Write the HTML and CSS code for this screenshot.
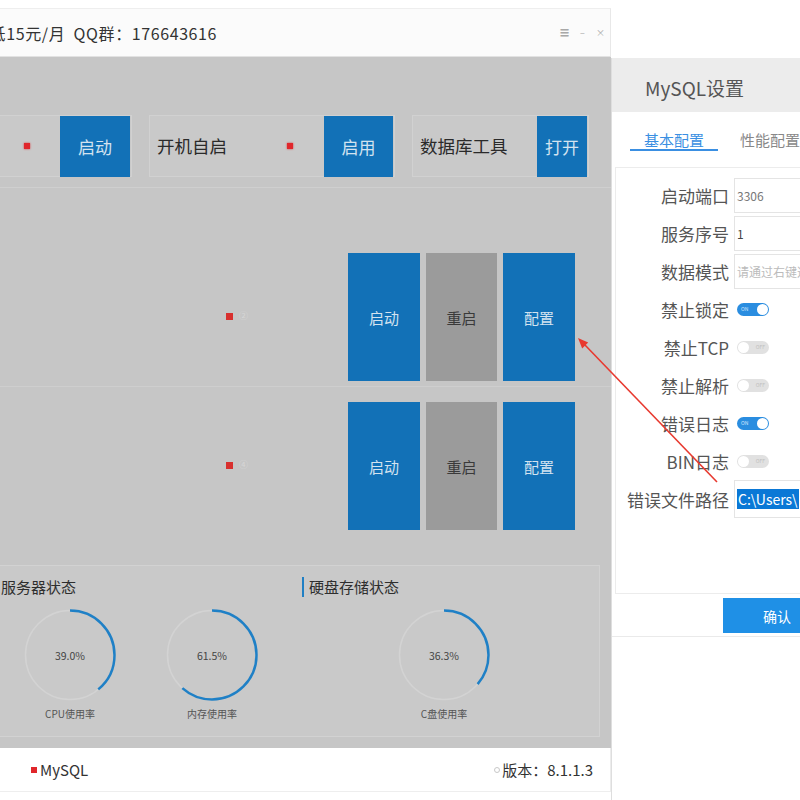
FILE: index.html
```html
<!DOCTYPE html>
<html lang="zh">
<head>
<meta charset="utf-8">
<title>MySQL</title>
<link rel="stylesheet" href="styles.css">
</head>
<body>
<div class="screen">
  <div class="window">
    <div class="titlebar">
      <span class="title">最低15元/月&nbsp;&nbsp;QQ群：176643616</span>
      <div class="winctl"><span>☰</span><span>–</span><span>×</span></div>
    </div>
    <div class="content">
      <div class="toprow">
        <div class="card card-a"><span class="rdot"></span><button class="btn btn-top">启动</button></div>
        <div class="card card-b"><span class="clabel">开机自启</span><span class="rdot"></span><button class="btn btn-top btn-b">启用</button></div>
        <div class="card card-c"><span class="clabel">数据库工具</span><button class="btn btn-top btn-c">打开</button></div>
      </div>
      <div class="svc svc-1">
        <div class="svc-info"><span class="sdot"></span><span class="snum">②</span></div>
        <div class="svc-btns">
          <button class="btn btn-svc">启动</button>
          <button class="btn btn-svc btn-gray">重启</button>
          <button class="btn btn-svc">配置</button>
        </div>
      </div>
      <div class="svc svc-2">
        <div class="svc-info"><span class="sdot"></span><span class="snum">④</span></div>
        <div class="svc-btns">
          <button class="btn btn-svc">启动</button>
          <button class="btn btn-svc btn-gray">重启</button>
          <button class="btn btn-svc">配置</button>
        </div>
      </div>
      <div class="status">
        <div class="sec">
          <div class="sec-title sec-title-left">服务器状态</div>
          <div class="gauges">
            <div class="gauge">
              <div class="ring">
                <svg width="92" height="92" viewBox="0 0 92 92"><circle class="track" cx="46" cy="46" r="44.5"/><circle class="arc" cx="46" cy="46" r="44.5" stroke-dasharray="109 280" transform="rotate(-90 46 46)"/></svg>
                <span class="pct">39.0%</span>
              </div>
              <div class="glabel">CPU使用率</div>
            </div>
            <div class="gauge">
              <div class="ring">
                <svg width="92" height="92" viewBox="0 0 92 92"><circle class="track" cx="46" cy="46" r="44.5"/><circle class="arc" cx="46" cy="46" r="44.5" stroke-dasharray="172 280" transform="rotate(-90 46 46)"/></svg>
                <span class="pct">61.5%</span>
              </div>
              <div class="glabel">内存使用率</div>
            </div>
          </div>
        </div>
        <div class="sec">
          <div class="sec-title">硬盘存储状态</div>
          <div class="gauges">
            <div class="gauge">
              <div class="ring">
                <svg width="92" height="92" viewBox="0 0 92 92"><circle class="track" cx="46" cy="46" r="44.5"/><circle class="arc" cx="46" cy="46" r="44.5" stroke-dasharray="101.5 280" transform="rotate(-90 46 46)"/></svg>
                <span class="pct">36.3%</span>
              </div>
              <div class="glabel">C盘使用率</div>
            </div>
          </div>
        </div>
      </div>
    </div>
    <div class="footer">
      <span class="fdot"></span><span class="fname">MySQL</span>
      <span class="fver"><span class="ocirc"></span>版本：8.1.1.3</span>
    </div>
  </div>

  <div class="dialog">
    <div class="dhead">MySQL设置</div>
    <div class="tabs">
      <span class="tab tab-on">基本配置</span>
      <span class="tab">性能配置</span>
    </div>
    <div class="form">
      <div class="frow"><span class="flabel">启动端口</span><div class="field">3306</div></div>
      <div class="frow"><span class="flabel">服务序号</span><div class="field field-dark">1</div></div>
      <div class="frow"><span class="flabel">数据模式</span><div class="field field-ph">请通过右键选择</div></div>
      <div class="frow"><span class="flabel">禁止锁定</span><span class="sw sw-on"><span class="swt">ON</span><span class="knob"></span></span></div>
      <div class="frow"><span class="flabel">禁止TCP</span><span class="sw"><span class="knob"></span><span class="swt">OFF</span></span></div>
      <div class="frow"><span class="flabel">禁止解析</span><span class="sw"><span class="knob"></span><span class="swt">OFF</span></span></div>
      <div class="frow"><span class="flabel">错误日志</span><span class="sw sw-on"><span class="swt">ON</span><span class="knob"></span></span></div>
      <div class="frow"><span class="flabel">BIN日志</span><span class="sw"><span class="knob"></span><span class="swt">OFF</span></span></div>
      <div class="frow"><span class="flabel">错误文件路径</span><div class="field field-path"><span class="sel">C:\Users\</span></div></div>
    </div>
    <div class="dfoot"><button class="ok">确认</button></div>
  </div>

  <svg class="arrow" width="800" height="800" viewBox="0 0 800 800">
    <line x1="717" y1="482" x2="584" y2="344" stroke="#e8392f" stroke-width="1.6"/>
    <polygon points="578,338 588.2,342.6 582.2,348.4" fill="#e8392f"/>
  </svg>
</div>
</body>
</html>
```
FILE: styles.css
```css
* { box-sizing: border-box; margin: 0; padding: 0; }
html, body { width: 800px; height: 800px; overflow: hidden; background: #fff; }
body { font-family: "Noto Sans CJK SC", "Noto Sans", sans-serif; color: #333; }
button { font-family: inherit; border: none; cursor: pointer; }

.screen { position: relative; display: flex; align-items: flex-start; width: 800px; height: 800px; overflow: hidden; }

/* main window */
.window { width: 611px; flex: none; margin-top: 8px; display: flex; flex-direction: column; overflow: hidden; }
.titlebar { height: 49px; background: #fbfbfb; border-top: 1px solid #eeeeee; border-right: 1px solid #e8e8e8; border-bottom: 1px solid #e2e2e2; display: flex; align-items: center; white-space: nowrap; overflow: hidden; }
.title { margin-left: -27px; font-size: 16px; letter-spacing: 0.6px; line-height: 20px; color: #333; }
.winctl { margin-left: auto; margin-right: 5px; display: flex; gap: 9px; color: #a8a8a8; font-size: 9px; line-height: 10px; }
.winctl span { width: 9px; text-align: center; }

.content { background: #c6c6c6; height: 691px; display: flex; flex-direction: column; }

.toprow { display: flex; gap: 17px; padding: 58px 0 10px 0; border-bottom: 1px solid #cfcfcf; }
.card { height: 62px; border: 1px solid #d1d1d1; background: #c9c9c9; display: flex; align-items: center; flex: none; }
.card-a { width: 200px; margin-left: -68px; }
.card-b { width: 246px; }
.card-c { width: 177px; }
.clabel { padding-left: 7px; font-size: 17.5px; line-height: 22px; color: #2a2a2a; }
.rdot { width: 6px; height: 6px; background: #e0262b; box-shadow: 0 0 2px #e0262b; margin-left: auto; margin-right: 30px; }
.card-b .rdot { margin-right: 31px; }
.btn { background: #1271b7; color: #d3e3f0; }
.btn-top { width: 70px; height: 61px; margin-right: 1px; font-size: 17px; }
.btn-b { width: 69px; }
.btn-c { width: 50px; margin-left: auto; }

.svc { display: flex; align-items: center; border-bottom: 1px solid #cecece; }
.svc-1 { padding: 65px 0 5px; }
.svc-2 { padding: 15px 0 20px; border-bottom: none; }
.svc-info { margin-left: 226px; display: flex; align-items: center; gap: 6px; margin-top: -2px; }
.sdot { width: 7px; height: 7px; background: #d8302e; }
.snum { font-size: 9px; color: #d6d6d6; line-height: 10px; }
.svc-btns { margin-left: auto; margin-right: 36px; display: flex; gap: 6px; }
.btn-svc { width: 72px; height: 128px; font-size: 15px; }
.btn-svc:nth-child(2) { width: 71px; }
.btn-gray { background: #9b9b9b; color: #3a3a3a; }

.status { margin: 15px 0 0 -14px; width: 614px; height: 172px; background: #c9c9c9; border: 1px solid #d2d2d2; padding: 11px 0 0 12px; display: grid; grid-template-columns: 284px 284px; column-gap: 19px; }
.sec-title { font-size: 15px; line-height: 20px; color: #2e2e2e; border-left: 2px solid #1f7fc4; padding-left: 5px; height: 20px; }
.sec-title-left { margin-left: -5px; }
.gauges { display: flex; margin-top: 12px; }
.gauge { flex: 1; display: flex; flex-direction: column; align-items: center; }
.ring { display: grid; place-items: center; width: 92px; height: 92px; }
.ring svg, .ring .pct { grid-area: 1 / 1; }
.track { fill: none; stroke: #d3d3d3; stroke-width: 1.5; }
.arc { fill: none; stroke: #1f80c6; stroke-width: 2.5; }
.pct { font-size: 10.5px; color: #444; }
.glabel { margin-top: 6px; font-size: 10px; line-height: 14px; color: #555; }

.footer { height: 44px; background: #fff; border-bottom: 1px solid #eeeeee; border-right: 1px solid #ececec; display: flex; align-items: center; padding: 0 17px 0 31px; font-size: 15px; color: #333; }
.fdot { width: 6px; height: 6px; background: #e0262b; margin-right: 3px; }
.fname { line-height: 20px; }
.fver { margin-left: auto; display: flex; align-items: center; line-height: 20px; }
.ocirc { width: 6px; height: 6px; border: 1px solid #c8c8c8; border-radius: 50%; margin-right: 2px; }

/* dialog */
.dialog { flex: 1; margin-top: 58px; height: 742px; background: #fff; border-left: 1px solid #dedede; overflow: hidden; }
.dhead { height: 54px; background: #ececec; display: flex; align-items: center; padding: 5px 0 0 33px; font-size: 19px; color: #555; white-space: nowrap; }
.tabs { display: flex; padding: 19px 0 16px 18px; white-space: nowrap; }
.tab { font-size: 15px; line-height: 18px; color: #888; width: 89px; text-align: center; height: 20px; }
.tab-on { color: #3a8fe2; border-bottom: 2px solid #3a8fe2; }
.tab + .tab { margin-left: 22px; width: auto; text-align: left; }
.form { margin-left: 3px; border-top: 1px solid #ececec; border-left: 1px solid #ececec; border-bottom: 1px solid #ececec; padding: 8px 0 75px; }
.frow { height: 38px; display: flex; align-items: center; white-space: nowrap; }
.flabel { width: 113px; text-align: right; font-size: 17px; color: #555; flex: none; }
.field { margin-left: 5px; width: 110px; height: 35px; border: 1px solid #e4e4e4; display: flex; align-items: center; padding-left: 2px; font-size: 12px; color: #777; flex: none; overflow: hidden; }
.field-dark { color: #444; }
.field-ph { color: #bbb; }
.field-path { height: 38px; }
.sel { background: #0a78d6; color: #fff; font-size: 14px; line-height: 20px; padding: 0 1px; }
.sw { margin-left: 8px; width: 32px; height: 13px; border-radius: 7px; background: #e1e1e1; display: flex; align-items: center; justify-content: space-between; padding: 0 1px; }
.sw-on { background: #2a8de0; }
.swt { font-size: 5px; line-height: 6px; color: #bdbdbd; padding: 0 3px; }
.sw-on .swt { color: #d6eaff; }
.knob { width: 11px; height: 11px; border-radius: 50%; background: #fff; }
.dfoot { padding: 4px 0 3px 111px; border-bottom: 1px solid #eaeaea; }
.ok { width: 90px; height: 35px; background: #1f90e6; color: #fff; font-size: 14px; text-align: left; padding-left: 40px; }

.arrow { position: absolute; left: 0; top: 0; pointer-events: none; }
```
